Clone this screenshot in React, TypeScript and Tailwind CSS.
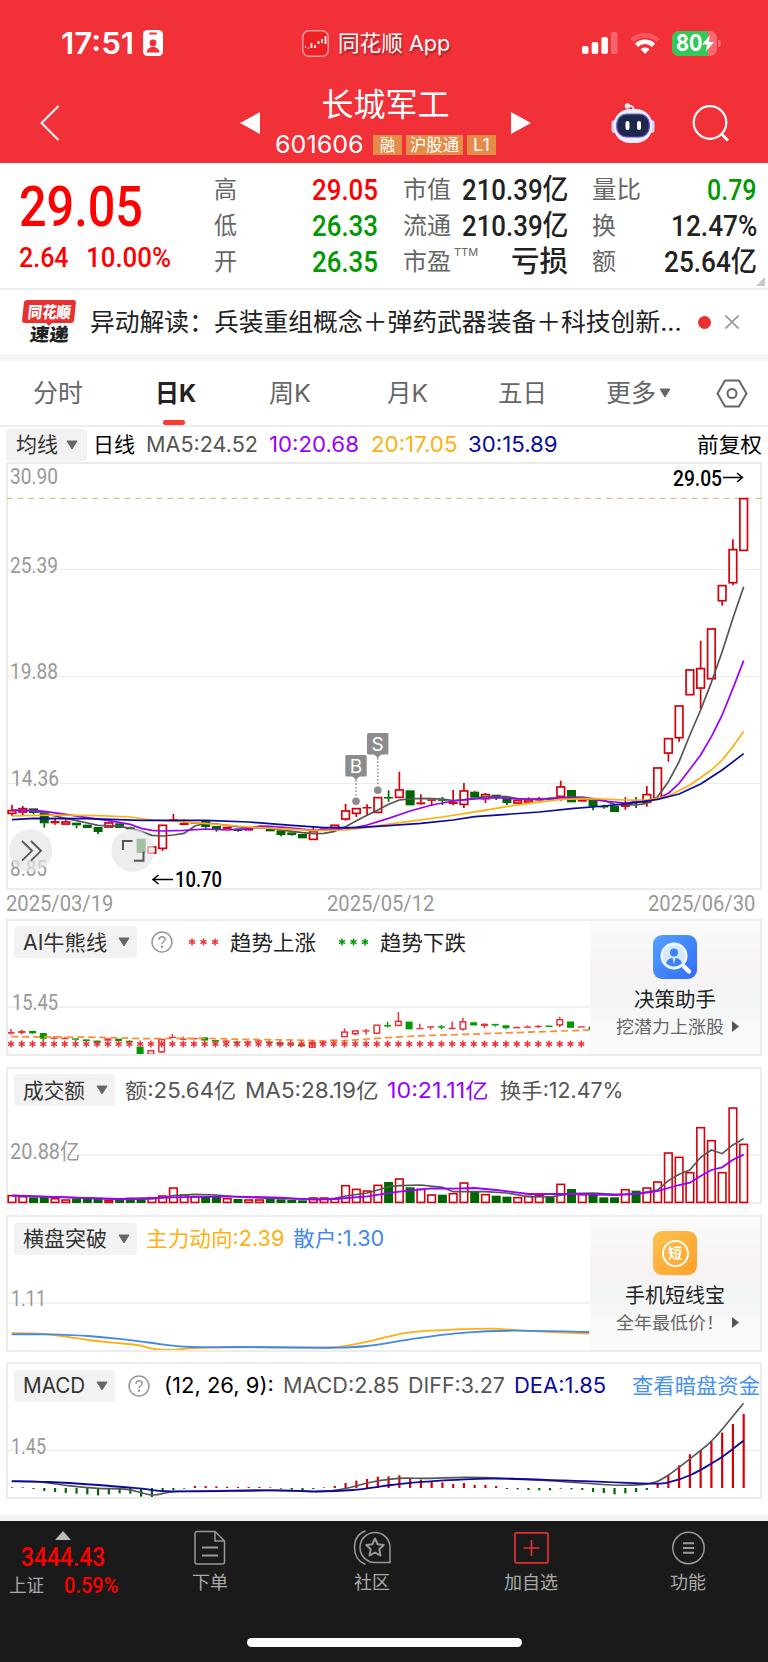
import { useLayoutEffect, useRef, useState, type ReactNode } from 'react'
import clsx from 'clsx'

const DIN = "font-['Roboto','Noto_Sans_CJK_SC',sans-serif]"
const RED = '#d6000a'
const GREEN = '#006600'

// one slot per trading day
const dayX = (i: number) => 12 + i * 10.76

// [direction, body top, body bottom, high, low] in thirds of a pixel below y=700
type Candle = [1 | -1, number, number, number, number]
const candles: Candle[] = [
  [1, 331, 341, 314, 347], [1, 325, 337, 318, 345], [-1, 325, 339, 325, 343], [-1, 337, 370, 337, 383],
  [1, 363, 370, 355, 374], [1, 365, 373, 358, 373], [-1, 368, 376, 368, 385], [-1, 374, 384, 374, 384],
  [-1, 381, 396, 381, 402], [1, 368, 382, 365, 382], [-1, 370, 384, 370, 384], [-1, 382, 388, 380, 388],
  [-1, 416, 459, 416, 459], [1, 440, 460, 440, 460], [1, 375, 446, 375, 453], [1, 358, 361, 342, 361],
  [1, 369, 375, 358, 375], [1, 366, 371, 366, 371], [-1, 362, 381, 362, 385], [-1, 378, 388, 378, 395],
  [1, 380, 387, 380, 387], [-1, 386, 393, 386, 395], [1, 385, 392, 385, 392], [1, 379, 385, 379, 385],
  [-1, 386, 394, 386, 394], [-1, 391, 405, 391, 409], [-1, 397, 405, 397, 407], [-1, 402, 415, 402, 415],
  [1, 394, 419, 380, 419], [1, 385, 391, 385, 391], [1, 375, 384, 375, 384], [1, 332, 358, 311, 362],
  [1, 325, 341, 325, 351], [1, 321, 325, 313, 346], [1, 292, 338, 292, 338], [-1, 291, 295, 271, 305],
  [1, 269, 293, 215, 293], [-1, 271, 316, 271, 316], [1, 307, 313, 283, 314], [1, 298, 301, 298, 318],
  [-1, 298, 302, 291, 315], [1, 306, 312, 270, 316], [1, 272, 314, 249, 324], [-1, 275, 293, 272, 293],
  [1, 283, 297, 279, 309], [-1, 284, 293, 284, 300], [-1, 292, 309, 292, 315], [1, 301, 310, 299, 310],
  [1, 299, 307, 292, 309], [1, 295, 302, 291, 307], [-1, 294, 300, 292, 302], [1, 260, 290, 242, 302],
  [-1, 270, 307, 270, 307], [1, 298, 305, 298, 305], [-1, 300, 319, 300, 331], [-1, 318, 322, 314, 326],
  [-1, 318, 336, 318, 336], [1, 314, 321, 292, 329], [-1, 302, 305, 291, 324], [1, 283, 308, 258, 320],
  [1, 203, 295, 203, 295], [1, 115, 160, 115, 185], [1, 17, 114, 17, 125], [1, -91, -15, -91, -15],
  [1, -95, -35, -178, 27], [1, -214, -63, -214, -63], [1, -344, -297, -344, -283], [1, -452, -351, -482, -344],
  [1, -605, -448, -605, -448],
]

const ma5 = [
  331, 331, 333, 340, 348, 355, 362, 369, 376, 377, 379, 385, 394, 406, 408, 405, 400, 378, 369, 372, 376, 380, 383,
  383, 384, 390, 394, 398, 401, 400, 394, 380, 362, 346, 330, 313, 300, 297, 295, 296, 297, 302, 299, 295, 290, 289,
  290, 296, 298, 297, 297, 293, 291, 291, 296, 301, 313, 314, 315, 310, 290, 245, 185, 105, 30, -53, -145, -245, -340,
]

type Pts = [number, number][]
const ma10: Pts = [
  [0, 331], [2, 331], [3, 334], [5, 343], [7, 353], [9, 362], [11, 373], [12, 385], [13, 391], [14, 393], [16, 391],
  [18, 387], [20, 390], [22, 386], [23, 378], [24, 379], [26, 384], [28, 391], [30, 388], [32, 382], [33, 375],
  [35, 355], [37, 333], [39, 315], [41, 303], [43, 297], [45, 293], [47, 297], [49, 297], [51, 293], [53, 295],
  [55, 303], [57, 309], [59, 302], [60, 296], [61, 280], [62, 250], [63, 208], [64, 165], [65, 110], [66, 45],
  [67, -35], [68, -118],
]
const ma20: Pts = [
  [0, 348], [4, 345], [8, 347], [11, 351], [13, 360], [17, 368], [22, 381], [26, 388], [28, 392], [31, 390],
  [33, 382], [36, 368], [40, 351], [42, 341], [45, 325], [48, 310], [51, 298], [54, 296], [57, 300], [59, 300],
  [61, 288], [63, 255], [65, 210], [66, 180], [67, 140], [68, 94],
]
const ma30: Pts = [
  [0, 359], [2, 355], [7, 356], [12, 361], [18, 361], [22, 366], [26, 376], [29, 383], [32, 383], [35, 377],
  [38, 370], [41, 360], [43, 350], [46, 343], [49, 336], [52, 326], [55, 318], [58, 308], [60, 298], [62, 282],
  [64, 252], [66, 210], [68, 161],
]

const volume = [
  405, 408, 412, 411, 414, 418, 415, 416, 416, 420, 418, 413, 413, 411, 406, 382, 404, 408, 410, 408, 414, 417, 418,
  418, 417, 418, 420, 421, 412, 412, 414, 375, 386, 391, 374, 366, 355, 382, 386, 403, 404, 399, 367, 396, 402, 407,
  410, 411, 407, 405, 408, 371, 387, 402, 405, 412, 412, 387, 392, 382, 364, 277, 290, 336, 201, 240, 336, 142, 251,
]
const volMa5: Pts = [
  [0, 408], [5, 412], [10, 418], [13, 417], [14, 413], [15, 407], [17, 403], [19, 405], [21, 411], [25, 416],
  [29, 418], [30, 415], [31, 408], [33, 399], [34, 390], [35, 380], [36, 377], [38, 375], [40, 382], [41, 395],
  [44, 395], [46, 399], [48, 410], [50, 411], [52, 401], [54, 399], [56, 403], [58, 402], [60, 390], [61, 362],
  [62, 343], [63, 330], [64, 292], [65, 270], [66, 281], [67, 255], [68, 236],
]
const volMa10: Pts = [
  [0, 406], [6, 413], [10, 417], [15, 412], [20, 409], [25, 413], [28, 419], [30, 417], [33, 409], [36, 395],
  [39, 385], [41, 386], [43, 384], [45, 390], [48, 402], [52, 402], [56, 405], [58, 402], [60, 393], [61, 384],
  [62, 375], [63, 368], [64, 348], [65, 330], [66, 322], [67, 299], [68, 284],
]

const macd = [
  2, 2, -3, -9, -12, -15, -17, -19, -22, -19, -16, -17, -26, -29, -13, -6, -2, 6, 6, 5, 4, 3, 3, 3, 2, -2, -5, -7, -3,
  2, 6, 15, 22, 27, 34, 35, 38, 28, 25, 20, 17, 12, 15, 9, 9, 6, -3, -4, -6, -7, -7, -2, -4, -6, -12, -15, -19, -16,
  -12, -6, 14, 37, 68, 101, 114, 140, 166, 192, 222,
]

// freehand curves, x in 1/2.0417 px and y in 1/3 px
const mainForce: Pts = [
  [24, 384], [80, 386], [130, 394], [180, 405], [230, 413], [280, 420], [310, 431], [350, 435], [400, 429],
  [500, 427], [640, 428], [690, 426], [750, 410], [820, 386], [880, 377], [1000, 371], [1060, 376], [1203, 386],
]
const retail: Pts = [
  [24, 388], [100, 388], [180, 393], [270, 406], [330, 418], [390, 426], [500, 426], [690, 428], [760, 421],
  [850, 400], [950, 383], [1050, 377], [1203, 381],
]
const diff: Pts = [
  [24, 378], [80, 381], [140, 392], [200, 400], [260, 403], [310, 420], [350, 411], [400, 408], [560, 406],
  [650, 410], [700, 402], [760, 381], [815, 370], [870, 370], [950, 367], [1020, 369], [1130, 378], [1250, 390],
  [1310, 389], [1340, 380], [1365, 360], [1410, 310], [1450, 262], [1475, 222], [1518, 145],
]
const dea: Pts = [
  [24, 379], [100, 381], [200, 390], [290, 401], [350, 409], [560, 406], [640, 409], [720, 405], [800, 390],
  [870, 380], [1000, 371], [1150, 376], [1330, 386], [1370, 380], [1410, 360], [1450, 328], [1480, 300], [1518, 257],
]
const bullBear: Pts = [
  [23, 380], [200, 382], [300, 386], [400, 385], [500, 388], [600, 390], [680, 393], [750, 387], [850, 378],
  [950, 373], [1050, 368], [1203, 360],
]

const dayLine = (pts: Pts, top: number) => pts.map(([i, v]) => `${dayX(i)},${top + v / 3}`).join(' ')

function smooth(pts: Pts, top: number) {
  const p = pts.map(([x, y]) => [x / 2.0417, top + y / 3])
  let d = `M${p[0][0]} ${p[0][1]}`
  for (let i = 0; i < p.length - 1; i++) {
    const a = p[i - 1] ?? p[i]
    const b = p[i]
    const c = p[i + 1]
    const e = p[i + 2] ?? c
    d += `C${b[0] + (c[0] - a[0]) / 6} ${b[1] + (c[1] - a[1]) / 6} ${c[0] - (e[0] - b[0]) / 6} ${c[1] - (e[1] - b[1]) / 6} ${c[0]} ${c[1]}`
  }
  return d
}

// Squeezes or stretches a single line of text to the width of its box
function Fit({ className, children }: { className?: string; children: ReactNode }) {
  const inner = useRef<HTMLSpanElement>(null)
  const [scale, setScale] = useState(1)
  useLayoutEffect(() => {
    const el = inner.current
    if (el && el.parentElement) setScale(el.parentElement.clientWidth / el.offsetWidth)
  }, [])
  return (
    <div className={clsx('shrink-0 whitespace-nowrap leading-none', className)}>
      <span ref={inner} className="inline-block origin-left" style={{ transform: `scaleX(${scale})` }}>
        {children}
      </span>
    </div>
  )
}

function Axis({ x, y, w, children, fill = '#999' }: { x: number; y: number; w: number; children: string; fill?: string }) {
  return (
    <text x={x} y={y + 7.7} textLength={w} lengthAdjust="spacingAndGlyphs" fill={fill} className={clsx(DIN, 'text-[21.5px]')}>
      {children}
    </text>
  )
}

function Caret({ className }: { className?: string }) {
  return (
    <svg viewBox="0 0 12 10" className={clsx('h-[10px] w-[12px] shrink-0', className)}>
      <path d="M1 1h10L6 9z" fill="#666" stroke="#666" strokeLinejoin="round" />
    </svg>
  )
}

function Help({ className }: { className?: string }) {
  return (
    <svg viewBox="0 0 22 22" fill="none" stroke="#999" strokeWidth="1.5" className={clsx('size-[22px] shrink-0', className)}>
      <circle cx="11" cy="11" r="10" />
      <path d="M8 8.8c0-1.8 1.3-3 3-3s3 1.2 3 2.8c0 2-3 2.3-3 4.6" />
      <circle cx="11" cy="15.7" r=".5" fill="#999" />
    </svg>
  )
}

function StatusBar() {
  return (
    <div className="flex h-[86px] items-center pl-[61px] font-semibold">
      <Fit className="w-[73px] text-[30px]">17:51</Fit>
      <svg viewBox="0 0 20 26" className="ml-[9px] h-[26px] w-[20px]">
        <rect width="20" height="26" rx="4.5" fill="#fff" />
        <rect x="6" y="2.5" width="8" height="2" rx="1" fill="#f33038" />
        <circle cx="10" cy="13" r="3.4" fill="#f33038" />
        <path d="M3.5 22.5c.5-3.600 3-5.500 6.500-5.500s6 1.900 6.500 5.500z" fill="#f33038" />
      </svg>
      <svg viewBox="0 0 27 27" className="ml-[139px] size-[27px]">
        <rect x=".8" y=".8" width="25.4" height="25.4" rx="6" fill="#ee2024" stroke="#f89a9d" strokeWidth="1.5" />
        <path d="M3 17h1M6 18h1M9.500 13v5M13 15v3M16.500 11v3M20 9v4M23.500 6v8" stroke="#fff" strokeWidth="1.8" />
      </svg>
      <Fit className="ml-[9px] w-[112px] text-[22px] font-normal [text-shadow:1px_2px_2px_#0005]">同花顺 App</Fit>
      <svg viewBox="0 0 36 24" className="ml-[132px] h-[24px] w-[36px]" fill="#fff">
        <rect y="15" width="6.5" height="8" rx="2" />
        <rect x="9.7" y="11" width="6.5" height="12" rx="2" />
        <rect x="19.4" y="6" width="6.5" height="17" rx="2" />
        <rect x="29" y="1" width="6.5" height="22" rx="2" opacity=".25" />
      </svg>
      <svg viewBox="0 0 30 22" className="ml-[12px] h-[22px] w-[30px]" fill="none" stroke="#fff" strokeWidth="4.5">
        <path d="M1.800 8.500a19 19 0 0 1 26.400 0" opacity=".2" />
        <path d="M6.500 13.300a12.200 12.200 0 0 1 17 0" />
        <path d="M15 22l-4.500-4.800c2.400-2.200 6.600-2.200 9 0z" fill="#fff" stroke="none" />
      </svg>
      <div className="relative ml-[12px] flex h-[25px] w-[45px] items-center rounded-[7px] bg-[#f76a70]">
        <div className="absolute inset-y-0 left-0 w-[36px] rounded-l-[7px] bg-[#34c759]" />
        <Fit className="relative ml-[4px] w-[26px] text-[23px] font-bold">80</Fit>
        <svg viewBox="0 0 13 18" className="relative h-[17px] w-[12px]">
          <path d="M8.500 0L0 10h5.500L4 18l9-10.500H7.500z" fill="#fff" />
        </svg>
      </div>
      <div className="ml-[1px] h-[7px] w-[3px] rounded-r-full bg-[#f76a70]" />
    </div>
  )
}

function Robot() {
  return (
    <svg viewBox="0 0 44 42" className="h-[42px] w-[44px]">
      <defs>
        <linearGradient id="visor" x1="0" y1="0" x2="1" y2="1">
          <stop stopColor="#3fa0e8" />
          <stop offset=".4" stopColor="#8a4be8" />
          <stop offset="1" stopColor="#5a3cd8" />
        </linearGradient>
      </defs>
      <path d="M23 9c0-4-1.500-5.500-6-5.500" fill="none" stroke="#eef0fb" strokeWidth="2" />
      <circle cx="16.500" cy="4" r="2.800" fill="#e4e7f6" />
      <rect x=".5" y="18" width="6" height="13" rx="3" fill="#cfd3f2" />
      <rect x="37.5" y="18" width="6" height="13" rx="3" fill="#cfd3f2" />
      <rect x="2.5" y="7" width="39" height="34" rx="16.5" fill="#eceefa" />
      <rect x="5.700" y="12" width="32.600" height="23" rx="10" fill="#1e2848" stroke="url(#visor)" strokeWidth="1.2" />
      <rect x="14.5" y="19" width="4" height="9" rx="2" fill="#fff" />
      <rect x="26" y="19" width="4" height="9" rx="2" fill="#fff" />
    </svg>
  )
}

function TitleBar() {
  return (
    <div className="flex h-[77px] items-start">
      <svg viewBox="0 0 20 36" className="mt-[19px] ml-[40px] h-[36px] w-[20px]" fill="none" stroke="#fff" strokeWidth="2">
        <path d="M18.500 1L1.500 18l17 17" />
      </svg>
      <svg viewBox="0 0 20 22" className="mt-[26px] ml-[180px] h-[22px] w-[20px]">
        <path d="M20 0v22L0 11z" fill="#fff" />
      </svg>
      <div className="ml-[15px] flex w-[221px] flex-col items-center">
        <Fit className="mt-[3px] w-[128px] text-[32px]">长城军工</Fit>
        <div className="mt-[12px] flex items-center gap-[4px] self-start text-[17px]">
          <Fit className="mr-[5px] w-[89px] text-[24px]">601606</Fit>
          <span className="flex h-[20px] w-[29px] items-center bg-[#e48d48] pl-[7px]">
            <Fit className="w-[15px]">融</Fit>
          </span>
          <span className="flex h-[20px] w-[57px] items-center bg-[#e48d48] pl-[4px]">
            <Fit className="w-[49px]">沪股通</Fit>
          </span>
          <span className="flex h-[20px] w-[29px] items-center bg-[#e48d48] pl-[6px]">
            <Fit className="w-[17px]">L1</Fit>
          </span>
        </div>
      </div>
      <svg viewBox="0 0 20 22" className="mt-[26px] ml-[15px] h-[22px] w-[20px]">
        <path d="M0 0v22l20-11z" fill="#fff" />
      </svg>
      <div className="mt-[16px] ml-[80px]">
        <Robot />
      </div>
      <svg viewBox="0 0 37 37" className="mt-[19px] ml-[37px] size-[37px]" fill="none" stroke="#fff" strokeWidth="2.2">
        <circle cx="18" cy="17.500" r="16.300" />
        <path d="M29.500 29l6.500 6.500" strokeWidth="2.8" />
      </svg>
    </div>
  )
}

function Quote() {
  const label = 'text-[#666] text-[24px]'
  const num = clsx(DIN, 'text-[29px] font-medium')
  return (
    <div className="flex h-[127px] border-b-2 border-[#ededed] text-[#222]">
      <div className="w-[214px] pl-[19px] text-[#ff0000]">
        <Fit className={clsx(DIN, 'mt-[16px] w-[124px] text-[56px] font-medium')}>29.05</Fit>
        <div className={clsx(DIN, 'mt-[9px] flex gap-[17px] text-[28px] font-medium')}>
          <Fit className="w-[50px]">2.64</Fit>
          <Fit className="w-[85px]">10.00%</Fit>
        </div>
      </div>
      <div className="flex w-[164px] flex-col gap-[6px] pt-[12px]">
        <div className="flex h-[30px] items-center justify-between">
          <Fit className={clsx(label, 'w-[23px]')}>高</Fit>
          <Fit className={clsx(num, 'w-[66px] text-[#ff0000]')}>29.05</Fit>
        </div>
        <div className="flex h-[30px] items-center justify-between">
          <Fit className={clsx(label, 'w-[23px]')}>低</Fit>
          <Fit className={clsx(num, 'w-[66px] text-[#009900]')}>26.33</Fit>
        </div>
        <div className="flex h-[30px] items-center justify-between">
          <Fit className={clsx(label, 'w-[23px]')}>开</Fit>
          <Fit className={clsx(num, 'w-[66px] text-[#009900]')}>26.35</Fit>
        </div>
      </div>
      <div className="ml-[25px] flex w-[165px] flex-col gap-[6px] pt-[12px]">
        <div className="flex h-[30px] items-center justify-between">
          <Fit className={clsx(label, 'w-[48px]')}>市值</Fit>
          <Fit className={clsx(num, 'w-[106px]')}>210.39亿</Fit>
        </div>
        <div className="flex h-[30px] items-center justify-between">
          <Fit className={clsx(label, 'w-[48px]')}>流通</Fit>
          <Fit className={clsx(num, 'w-[106px]')}>210.39亿</Fit>
        </div>
        <div className="flex h-[30px] items-center">
          <Fit className={clsx(label, 'w-[48px]')}>市盈</Fit>
          <Fit className="mb-[20px] ml-[3px] w-[24px] text-[11px] text-[#666]">TTM</Fit>
          <Fit className={clsx(num, 'ml-auto w-[57px]')}>亏损</Fit>
        </div>
      </div>
      <div className="ml-[24px] flex w-[165px] flex-col gap-[6px] pt-[12px]">
        <div className="flex h-[30px] items-center justify-between">
          <Fit className={clsx(label, 'w-[49px]')}>量比</Fit>
          <Fit className={clsx(num, 'w-[50px] text-[#009900]')}>0.79</Fit>
        </div>
        <div className="flex h-[30px] items-center justify-between">
          <Fit className={clsx(label, 'w-[24px]')}>换</Fit>
          <Fit className={clsx(num, 'w-[86px]')}>12.47%</Fit>
        </div>
        <div className="flex h-[30px] items-center justify-between">
          <Fit className={clsx(label, 'w-[24px]')}>额</Fit>
          <Fit className={clsx(num, 'w-[93px]')}>25.64亿</Fit>
        </div>
      </div>
      <svg viewBox="0 0 9 9" className="mb-[2px] -ml-[1px] size-[9px] self-end">
        <path d="M9 0v9H0z" fill="#c8c8c8" />
      </svg>
    </div>
  )
}

function News() {
  return (
    <div className="flex h-[64px] items-center pl-[22px]">
      <div className="flex w-[54px] flex-col items-center font-black">
        <div className="flex h-[23px] w-[52px] -skew-x-6 items-center justify-center rounded-[3px] bg-[#e93030] text-white">
          <Fit className="w-[43px] text-[16px]">同花顺</Fit>
        </div>
        <svg viewBox="0 0 8 4" className="h-[3px] w-[8px]">
          <path d="M0 0h8L4 4z" fill="#e93030" />
        </svg>
        <Fit className="w-[39px] -skew-x-6 text-[18px] text-[#222]">速递</Fit>
      </div>
      <Fit className="ml-[14px] w-[592px] text-[25px] text-[#222]">异动解读：兵装重组概念＋弹药武器装备＋科技创新...</Fit>
      <span className="ml-[16px] size-[13px] rounded-full bg-[#e93030]" />
      <svg viewBox="0 0 14 14" className="ml-[14px] size-[14px]" stroke="#999" strokeWidth="1.7">
        <path d="M.5.5l13 13M13.500.5l-13 13" />
      </svg>
    </div>
  )
}

function Tabs() {
  return (
    <div className="flex h-[73px] items-center border-t-[7px] border-b-2 border-t-[#f4f4f4] border-b-[#eee] pl-[33px] text-[24.5px] text-[#666]">
      <Fit className="w-[50px]">分时</Fit>
      <div className="relative ml-[72px] text-[#222]">
        <Fit className="w-[41px] font-bold">日K</Fit>
        <span className="absolute top-[39px] left-[8px] h-[5px] w-[22px] rounded-[2px] bg-[#ff3a30]" />
      </div>
      <Fit className="ml-[73px] w-[42px]">周K</Fit>
      <Fit className="ml-[76px] w-[41px]">月K</Fit>
      <Fit className="ml-[70px] w-[49px]">五日</Fit>
      <Fit className="ml-[59px] w-[50px]">更多</Fit>
      <Caret className="ml-[3px]" />
      <svg viewBox="0 0 32 29" className="ml-[45px] h-[29px] w-[32px]" fill="none" stroke="#666" strokeWidth="2">
        <path d="M9 1.500h14l7.500 13-7.500 13H9l-7.500-13z" strokeLinejoin="round" />
        <circle cx="16" cy="14.500" r="4.500" />
      </svg>
    </div>
  )
}

function Averages() {
  return (
    <div className="flex h-[35px] items-center pl-[6px] text-[21px]">
      <div className="flex h-[32px] w-[81px] items-center rounded-[4px] bg-[#f2f2f2] pl-[10px] text-[#333]">
        <Fit className="w-[42px]">均线</Fit>
        <Caret className="ml-[8px]" />
      </div>
      <Fit className="ml-[6px] w-[42px] text-black">日线</Fit>
      <Fit className="ml-[11px] w-[112px] text-[#555]">MA5:24.52</Fit>
      <Fit className="ml-[11px] w-[90px] text-[#9900ff]">10:20.68</Fit>
      <Fit className="ml-[12px] w-[86px] text-[#ffaf0f]">20:17.05</Fit>
      <Fit className="ml-[11px] w-[90px] text-[#0a0aa0]">30:15.89</Fit>
      <Fit className="ml-[139px] w-[65px] text-black">前复权</Fit>
    </div>
  )
}

function Marker({ x, y, dot, letter }: { x: number; y: number; dot: number; letter: string }) {
  return (
    <g>
      <path d={`M${x - 4} ${y + 21}h8l-4 4z`} fill="#8c8c8c" />
      <rect x={x - 10.7} y={y} width="21.4" height="21.5" rx="1.5" fill="#8c8c8c" />
      <text x={x} y={y + 17.5} textAnchor="middle" fill="#fff" className="text-[19px]">
        {letter}
      </text>
      <path d={`M${x} ${y + 25}V${dot - 4}`} stroke="#8c8c8c" strokeWidth="1.5" strokeDasharray="1.5 2" />
      <circle cx={x} cy={dot} r="3.8" fill="#8c8c8c" />
    </g>
  )
}

function KLine() {
  return (
    <svg viewBox="0 462 768 428" className="block h-[428px] w-[768px] overflow-visible" fill="none">
      <path d="M8 569.300h753M8 676.300h753M8 783.300h753" stroke="#ededed" strokeWidth="1.2" />
      <rect x="7" y="463" width="754" height="426" stroke="#ebebeb" strokeWidth="2" />
      <path d="M7 498.300h755" stroke="#e3bb85" strokeWidth="1.3" strokeDasharray="5.5 5.2" />
      <Axis x={10} y={476} w={48}>30.90</Axis>
      <Axis x={10} y={565} w={48}>25.39</Axis>
      <Axis x={10} y={671.5} w={48}>19.88</Axis>
      <Axis x={11} y={778.5} w={48}>14.36</Axis>
      <Axis x={10} y={868} w={37}>8.85</Axis>
      {candles.map(([dir, top, bottom, high, low], i) => {
        const x = dayX(i)
        const y = 700 + top / 3
        const h = (bottom - top) / 3
        const color = dir > 0 ? RED : GREEN
        return (
          <g key={i} stroke={color} strokeWidth="1.7">
            <path d={`M${x} ${700 + high / 3}V${y}M${x} ${y + h}V${700 + low / 3}`} />
            {dir > 0 && h > 2.5 ? (
              <rect x={x - 3.8} y={y + 0.3} width="7.6" height={h - 0.6} />
            ) : (
              <rect x={x - 4.5} y={y} width="9" height={Math.max(h, 1.5)} fill={color} stroke="none" />
            )}
          </g>
        )
      })}
      <g strokeWidth="1.7" strokeLinejoin="round">
        <polyline points={ma5.map((v, i) => `${dayX(i)},${700 + v / 3}`).join(' ')} stroke="#555" />
        <polyline points={dayLine(ma10, 700)} stroke="#9900ff" />
        <polyline points={dayLine(ma20, 700)} stroke="#ffaf0f" />
        <polyline points={dayLine(ma30, 700)} stroke="#0a0aa0" />
      </g>
      <Marker x={356} y={755} dot={801.3} letter="B" />
      <Marker x={377.7} y={733} dot={790.3} letter="S" />
      <g className="font-medium">
        <Axis x={673} y={478} w={49} fill="#000">29.05</Axis>
        <Axis x={175} y={879.5} w={47} fill="#000">10.70</Axis>
      </g>
      <path d="M723 477.500h19M737 473l5.500 4.500L737 482M173 879.500h-19.500M158.500 875l-5.500 4.500 5.500 4.500" stroke="#000" strokeWidth="1.5" />
      <circle cx="30.7" cy="850.5" r="21.5" fill="#e5e5e5" fillOpacity=".7" />
      <circle cx="132.7" cy="850.5" r="21.5" fill="#e5e5e5" fillOpacity=".7" />
      <path d="M22 841l10 9.800-10 9.800M31 841l10 9.800-10 9.800" stroke="#555" strokeWidth="1.8" />
      <path d="M123 850v-9h9.500M134 860.700h9.500v-9" stroke="#555" strokeWidth="2" />
    </svg>
  )
}

function Dates() {
  return (
    <div className={clsx(DIN, 'flex h-[29px] items-center justify-between pr-[13px] pb-px pl-[6px] text-[21.5px] text-[#999]')}>
      <Fit className="w-[107px]">2025/03/19</Fit>
      <Fit className="w-[107px]">2025/05/12</Fit>
      <Fit className="w-[107px]">2025/06/30</Fit>
    </div>
  )
}

function Picker({ className, children }: { className: string; children: string }) {
  return (
    <div className="flex h-[32px] shrink-0 items-center rounded-[4px] bg-[#f2f2f2] pr-[7px] pl-[9px] text-[#333]">
      <Fit className={className}>{children}</Fit>
      <Caret className="ml-[11px]" />
    </div>
  )
}

function Promo({ icon, title, sub }: { icon: ReactNode; title: ReactNode; sub: ReactNode }) {
  return (
    <div className="flex flex-1 flex-col items-center bg-[linear-gradient(#fafafa_5%,#f8f2f3_38%,#f1f5f4_58%,#fafafa_85%)] pt-[14px] text-[#222]">
      {icon}
      <div className="mt-[11px]">{title}</div>
      <div className="mt-[8px] flex items-center gap-[8px] pl-[5px] text-[#666]">
        {sub}
        <svg viewBox="0 0 7 11" className="h-[11px] w-[7px]">
          <path d="M0 0l7 5.500L0 11z" fill="#555" />
        </svg>
      </div>
    </div>
  )
}

const panel = 'mx-[6px] flex h-[137px] border-2 border-[#ececec] text-[21px]'

function BullBear() {
  return (
    <div className={panel}>
      <div className="w-[582px]">
        <div className="flex h-[41px] items-center pt-px pl-[6px] text-[#222]">
          <Picker className="w-[84px]">AI牛熊线</Picker>
          <Help className="ml-[14px]" />
          <Asterisks className="ml-[15px]" color="#e8333a" />
          <Fit className="ml-[10px] w-[86px]">趋势上涨</Fit>
          <Asterisks className="ml-[22px]" color="#009900" />
          <Fit className="ml-[10px] w-[86px]">趋势下跌</Fit>
        </div>
        <svg viewBox="8 962 582 92" className="block h-[92px] w-[582px]" fill="none">
          <path d="M8 1007h582" stroke="#ededed" strokeWidth="1.3" />
          <Axis x={12} y={1002.5} w={46}>15.45</Axis>
          {candles.slice(0, 55).map(([dir, top, bottom, high, low], i) => {
            // same prices on a flatter scale
            const at = (v: number) => 1012 + (v / 3 - 71.7) * 0.517
            const color = dir > 0 ? '#e8333a' : '#009900'
            const h = at(bottom) - at(top)
            return (
              <g key={i} stroke={color} strokeWidth="1.5">
                <path d={`M${dayX(i) - 1} ${at(high)}V${at(top)}M${dayX(i) - 1} ${at(bottom)}V${at(low)}`} />
                {dir > 0 && h > 2.5 ? (
                  <rect x={dayX(i) - 3.8} y={at(top)} width="5.6" height={h} />
                ) : (
                  <rect x={dayX(i) - 4.5} y={at(top)} width="7" height={Math.max(h, 1.4)} fill={color} stroke="none" />
                )}
              </g>
            )
          })}
          <path d={smooth(bullBear, 910)} stroke="#ff8c2e" strokeWidth="1.7" strokeDasharray="7 4" />
          {Array.from({ length: 54 }).map((_, i) => (
            <Star key={i} x={dayX(i) - 1} y={1044} color="#e8333a" />
          ))}
        </svg>
      </div>
      <Promo
        icon={
          <svg viewBox="0 0 44 44" className="size-[44px]">
            <defs>
              <linearGradient id="blue" x1="0" y1="0" x2="1" y2="1">
                <stop stopColor="#55a2ff" />
                <stop offset="1" stopColor="#2f6bf8" />
              </linearGradient>
            </defs>
            <rect width="44" height="44" rx="9" fill="url(#blue)" />
            <circle cx="21" cy="21" r="13.5" fill="#f2f8ff" />
            <circle cx="21" cy="21" r="11" fill="#d5e8ff" />
            <circle cx="21" cy="17.5" r="4" fill="#3b82f8" />
            <path d="M13 28c1-3 3.500-5 6.500-5l1.500 6.500 1.500-6.500c3 0 5.500 2 6.500 5a11 11 0 0 1-16 0z" fill="#3b82f8" />
            <path d="M31.500 32l4.500 4.500" stroke="#fff" strokeWidth="4.5" strokeLinecap="round" />
          </svg>
        }
        title={<Fit className="w-[82px] text-[20px]">决策助手</Fit>}
        sub={<Fit className="w-[108px] text-[17.5px]">挖潜力上涨股</Fit>}
      />
    </div>
  )
}

function Star({ x, y, color }: { x: number; y: number; color: string }) {
  return <path d={`M${x} ${y - 3.5}v7M${x - 3} ${y - 1.7}l6 3.400M${x - 3} ${y + 1.7}l6-3.400`} stroke={color} strokeWidth="1.5" />
}

function Asterisks({ className, color }: { className: string; color: string }) {
  return (
    <svg viewBox="0 0 32 10" className={clsx('h-[10px] w-[32px] shrink-0', className)}>
      {[4, 15.5, 27].map((x) => (
        <Star key={x} x={x} y={5} color={color} />
      ))}
    </svg>
  )
}

function Turnover() {
  return (
    <div className={clsx(panel, 'mt-[11px] flex-col')}>
      <div className="flex h-[37px] items-center gap-[9px] pt-[5px] pl-[6px] text-[#555]">
        <Picker className="w-[62px]">成交额</Picker>
        <Fit className="ml-px w-[111px]">额:25.64亿</Fit>
        <Fit className="w-[133px]">MA5:28.19亿</Fit>
        <Fit className="w-[102px] text-[#9900ff]">10:21.11亿</Fit>
        <Fit className="ml-[2px] w-[124px]">换手:12.47%</Fit>
      </div>
      <svg viewBox="8 1106 752 96" className="block h-[96px] w-[752px] shrink-0 overflow-visible" fill="none">
        <path d="M8 1155h752" stroke="#ededed" strokeWidth="1.3" />
        <Axis x={10} y={1151} w={70}>20.88亿</Axis>
        {volume.map((v, i) => {
          const y = 1060 + v / 3
          return candles[i][0] > 0 ? (
            <rect key={i} x={dayX(i) - 3.8} y={y + 0.7} width="7.6" height={1201.7 - y} stroke={RED} strokeWidth="1.6" />
          ) : (
            <rect key={i} x={dayX(i) - 4.5} y={y} width="9" height={1203 - y} fill={GREEN} />
          )
        })}
        <polyline points={dayLine(volMa5, 1060)} stroke="#555" strokeWidth="1.6" />
        <polyline points={dayLine(volMa10, 1060)} stroke="#9900ff" strokeWidth="1.8" />
      </svg>
    </div>
  )
}

function Breakout() {
  return (
    <div className={clsx(panel, 'mt-[11px]')}>
      <div className="w-[582px]">
        <div className="flex h-[41px] items-center pt-[2px] pl-[6px]">
          <Picker className="w-[84px]">横盘突破</Picker>
          <Fit className="ml-[9px] w-[138px] text-[#ffaf0f]">主力动向:2.39</Fit>
          <Fit className="ml-[9px] w-[91px] text-[#4488ee]">散户:1.30</Fit>
        </div>
        <svg viewBox="8 1258 582 92" className="block h-[92px] w-[582px]" fill="none">
          <path d="M8 1303h582" stroke="#ededed" strokeWidth="1.3" />
          <Axis x={11} y={1298.5} w={35}>1.11</Axis>
          <path d={smooth(mainForce, 1205)} stroke="#ffaf0f" strokeWidth="1.9" />
          <path d={smooth(retail, 1205)} stroke="#4488ee" strokeWidth="1.9" />
        </svg>
      </div>
      <Promo
        icon={
          <div className="flex size-[44px] shrink-0 items-center justify-center rounded-[9px] bg-linear-to-br from-[#ffc04d] to-[#ffa026]">
            <div className="flex size-[27px] items-center justify-center rounded-full border-2 border-white font-bold text-white">
              <Fit className="w-[14px] text-[14px]">短</Fit>
            </div>
          </div>
        }
        title={<Fit className="w-[100px] text-[20px]">手机短线宝</Fit>}
        sub={<Fit className="w-[108px] text-[17.5px]">全年最低价！</Fit>}
      />
    </div>
  )
}

function Macd() {
  return (
    <div className={clsx(panel, 'mt-[10px] flex-col')}>
      <div className="flex h-[38px] items-center pt-[5px] pl-[6px] text-[#555]">
        <Picker className="w-[62px]">MACD</Picker>
        <Help className="ml-[13px]" />
        <Fit className="ml-[14px] w-[110px] text-black">(12, 26, 9):</Fit>
        <Fit className="ml-[9px] w-[116px]">MACD:2.85</Fit>
        <Fit className="ml-[9px] w-[97px]">DIFF:3.27</Fit>
        <Fit className="ml-[9px] w-[92px] text-[#0a0aa0]">DEA:1.85</Fit>
        <Fit className="ml-[26px] w-[128px] text-[#4590f0]">查看暗盘资金</Fit>
      </div>
      <svg viewBox="8 1402 752 95" className="block h-[95px] w-[752px] shrink-0" fill="none">
        <path d="M8 1450.500h752" stroke="#ededed" strokeWidth="1.3" />
        <Axis x={11} y={1446} w={35}>1.45</Axis>
        {macd.map((v, i) => (
          <path key={i} d={`M${dayX(i)} 1488v${-v / 3}`} stroke={v > 0 ? RED : GREEN} strokeWidth="2.2" />
        ))}
        <path d={smooth(diff, 1355)} stroke="#555" strokeWidth="1.6" />
        <path d={smooth(dea, 1355)} stroke="#0a0aa0" strokeWidth="1.8" />
      </svg>
    </div>
  )
}

function BottomBar() {
  return (
    <div className="flex h-[147px] flex-col items-center border-t-[6px] border-[#f4f4f4] bg-[#1a1a1a] text-[18px] text-[#aaa]">
      <div className="flex h-[117px] w-full">
        <div className="w-[129px] pl-[9px]">
          <svg viewBox="0 0 16 9" className="mt-[10px] ml-[46px] h-[9px] w-[16px]">
            <path d="M8 0l8 9H0z" fill="#bbb" />
          </svg>
          <Fit className={clsx(DIN, 'mt-[5px] ml-[12px] w-[84px] text-[25px] font-medium text-[#ff0000]')}>3444.43</Fit>
          <div className="mt-[5px] flex items-center">
            <Fit className="w-[35px]">上证</Fit>
            <Fit className={clsx(DIN, 'ml-[20px] w-[54px] text-[21.5px] font-medium text-[#ff0000]')}>0.59%</Fit>
          </div>
        </div>
        <div className="ml-[30px] flex w-[102px] flex-col items-center gap-[9px] pt-[9px]">
          <svg viewBox="0 0 32 35" className="h-[35px] w-[32px]" fill="none" stroke="#999" strokeWidth="1.5">
            <path d="M3 1.500h18l9.500 9.500v21a2 2 0 0 1-2 2H3a2 2 0 0 1-2-2V3.500a2 2 0 0 1 2-2zM21 1.500V11h9.500" />
            <path d="M8 17.500h16M8 25.500h16" strokeWidth="2" />
          </svg>
          <Fit className="w-[36px]">下单</Fit>
        </div>
        <div className="ml-[60px] flex w-[102px] flex-col items-center gap-[9px] pt-[9px]">
          <svg viewBox="0 0 38 35" className="h-[35px] w-[38px]" fill="none" stroke="#999" strokeWidth="1.5">
            <path d="M12.500 1C5 3.500 1.500 10 1.500 17.500S5 31.500 12.500 34.500" />
            <path d="M37 32.500H22a15 15 0 1 1 15-15z" />
            <path d="M22 8.500l2.700 5.700 6 .8-4.400 4.300 1.100 6.200-5.400-3-5.400 3 1.100-6.200-4.400-4.300 6-.8z" strokeWidth="2" strokeLinejoin="round" />
          </svg>
          <Fit className="w-[36px]">社区</Fit>
        </div>
        <div className="ml-[57px] flex w-[102px] flex-col items-center gap-[9px] pt-[9px]">
          <svg viewBox="0 0 35 35" className="size-[35px]" fill="none" stroke="#e03030" strokeWidth="1.7">
            <rect x="1" y="2.8" width="33" height="30" rx="1" />
            <path d="M17.500 10v16M9.500 18h16" />
          </svg>
          <Fit className="w-[54px]">加自选</Fit>
        </div>
        <div className="ml-[55px] flex w-[102px] flex-col items-center gap-[9px] pt-[9px]">
          <svg viewBox="0 0 35 35" className="size-[35px]" fill="none" stroke="#999" strokeWidth="1.5">
            <circle cx="17.5" cy="18" r="15.7" />
            <path d="M12 13.200h11M12 18h11M12 22.800h11" strokeWidth="1.9" />
          </svg>
          <Fit className="w-[36px]">功能</Fit>
        </div>
      </div>
      <div className="h-[9px] w-[275px] rounded-full bg-white" />
    </div>
  )
}

export default function App() {
  return (
    <div className="h-[1662px] w-[768px] overflow-hidden bg-white font-['Inter','Noto_Sans_CJK_SC',sans-serif]">
      <header className="bg-[#f23038] text-white">
        <StatusBar />
        <TitleBar />
      </header>
      <Quote />
      <News />
      <Tabs />
      <Averages />
      <KLine />
      <Dates />
      <BullBear />
      <Turnover />
      <Breakout />
      <Macd />
      <div className="h-[16px]" />
      <BottomBar />
    </div>
  )
}
